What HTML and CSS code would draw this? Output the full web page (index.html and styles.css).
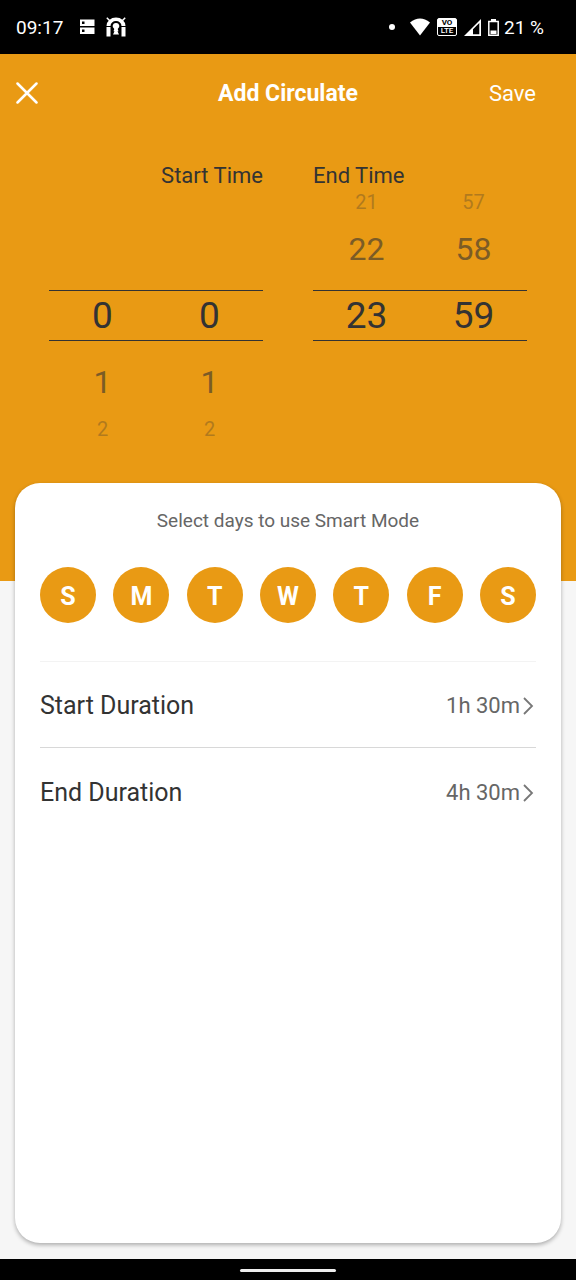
FILE: index.html
```html
<!DOCTYPE html>
<html lang="en">
<head>
<meta charset="utf-8">
<meta name="viewport" content="width=device-width, initial-scale=1">
<title>Add Circulate</title>
<link rel="stylesheet" href="styles.css">
</head>
<body>
<div class="status">
  <span class="clock">09:17</span>
  <svg class="icon-storage" width="16" height="16" viewBox="0 0 16 16" aria-hidden="true"><path fill="#fff" fill-rule="evenodd" d="M1 0.500H15.500V7H1zM3 2.500V5H5.500V2.500zM1 8.500H15.500V15H1zM3 10.500V13H5.500V10.500z"/></svg>
  <svg class="icon-key" width="20" height="20" viewBox="0 0 20 20" aria-hidden="true"><path fill="none" stroke="#fff" stroke-width="1.500" d="M0.800 0.800L4 4M19.200 0.800L16 4"/><path fill="#fff" d="M0.500 9A9.500 8.500 0 0 1 19.500 9H15.500A5.500 5 0 0 0 4.500 9zM0.500 10H4.500V19.500H0.500zM15.500 10H19.500V19.500H15.500z"/><path fill="#fff" d="M10 6A3.200 3.200 0 0 1 11.700 12L12.500 14.200H11.500L13 17.500H7L8.500 14.200H7.500L8.300 12A3.200 3.200 0 0 1 10 6z"/></svg>
  <div class="indicators">
    <span class="dot"></span>
    <svg width="20" height="18" viewBox="0 0 20 18" aria-hidden="true"><path fill="#fff" d="M0 4.500Q10-3.500 20 4.500L10 17.500z"/></svg>
    <span class="volte"><span class="vo">VO</span><span class="lte">LTE</span></span>
    <svg width="17" height="17" viewBox="0 0 17 17" aria-hidden="true"><path fill="#fff" fill-rule="evenodd" d="M17 0V17H0zM15.300 4L9 10.300V15.300H15.300z"/></svg>
    <svg width="11" height="17" viewBox="0 0 11 17" aria-hidden="true"><path fill="none" stroke="#fff" stroke-width="1.500" d="M0.800 2.500H10.200V16.200H0.800z"/><path fill="#fff" d="M3 0H8V2.500H3zM2.500 11.500H8.500V15H2.500z"/></svg>
    <span class="percent">21 %</span>
  </div>
</div>
<header class="hero">
  <div class="toolbar">
    <button class="close" type="button" aria-label="Close"><svg width="22" height="22" viewBox="0 0 22 22" aria-hidden="true"><path fill="none" stroke="#fff" stroke-width="2.500" stroke-linecap="round" d="M1.500 1.500L20.500 20.500M20.500 1.500L1.500 20.500"/></svg></button>
    <h1 class="title">Add Circulate</h1>
    <button class="save" type="button">Save</button>
  </div>
  <div class="pickers">
    <section class="picker picker-start">
      <h2 class="label">Start Time</h2>
      <div class="wheels">
        <div class="wheel"><span class="far"></span><span class="near"></span><span class="current">0</span><span class="near">1</span><span class="far">2</span></div>
        <div class="wheel"><span class="far"></span><span class="near"></span><span class="current">0</span><span class="near">1</span><span class="far">2</span></div>
      </div>
    </section>
    <section class="picker">
      <h2 class="label">End Time</h2>
      <div class="wheels">
        <div class="wheel"><span class="far">21</span><span class="near">22</span><span class="current">23</span><span class="near"></span><span class="far"></span></div>
        <div class="wheel"><span class="far">57</span><span class="near">58</span><span class="current">59</span><span class="near"></span><span class="far"></span></div>
      </div>
    </section>
  </div>
</header>
<main class="card">
  <p class="hint">Select days to use Smart Mode</p>
  <div class="days">
    <button class="day" type="button" aria-pressed="true">S</button>
    <button class="day" type="button" aria-pressed="true">M</button>
    <button class="day" type="button" aria-pressed="true">T</button>
    <button class="day" type="button" aria-pressed="true">W</button>
    <button class="day" type="button" aria-pressed="true">T</button>
    <button class="day" type="button" aria-pressed="true">F</button>
    <button class="day" type="button" aria-pressed="true">S</button>
  </div>
  <button class="row row-start" type="button"><span>Start Duration</span><span class="value">1h 30m<svg width="16" height="18" viewBox="0 0 16 18" aria-hidden="true"><path fill="none" stroke="#777" stroke-width="1.800" d="M4 1L12 9L4 17"/></svg></span></button>
  <button class="row" type="button"><span>End Duration</span><span class="value">4h 30m<svg width="16" height="18" viewBox="0 0 16 18" aria-hidden="true"><path fill="none" stroke="#777" stroke-width="1.800" d="M4 1L12 9L4 17"/></svg></span></button>
</main>
<div class="navbar"><span class="handle"></span></div>
</body>
</html>
```
FILE: styles.css
```css
* {
  box-sizing: border-box;
}

body {
  margin: 0;
  min-height: 100vh;
  display: flex;
  flex-direction: column;
  background: #f6f6f6;
  color: #333;
  font-family: Roboto, "Liberation Sans", sans-serif;
}

button {
  border: 0;
  padding: 0;
  background: none;
  color: inherit;
  font: inherit;
  cursor: pointer;
}

svg {
  display: block;
  flex: none;
}

.status {
  height: 54px;
  padding: 0 32px 0 16px;
  display: flex;
  align-items: center;
  background: #000;
  color: #fff;
  font-size: 19px;
}

.icon-storage {
  margin-left: 16px;
}

.icon-key {
  margin-left: 11px;
}

.indicators {
  margin-left: auto;
  display: flex;
  align-items: center;
  gap: 7px;
}

.dot {
  width: 6px;
  height: 6px;
  margin-right: 8px;
  border-radius: 50%;
  background: #fff;
}

.volte {
  width: 20px;
  border: 1px solid #fff;
  border-radius: 2px;
  display: flex;
  flex-direction: column;
  font-size: 8px;
  font-weight: 500;
  line-height: 8px;
  text-align: center;
}

.vo {
  background: #fff;
  color: #000;
  font-weight: 700;
}

.percent {
  margin-left: -2px;
}

.hero {
  flex: none;
  padding-bottom: 140px;
  background: #e99a14;
}

.toolbar {
  height: 78px;
  padding: 0 40px 0 16px;
  display: grid;
  grid-template-columns: 1fr auto 1fr;
  align-items: center;
  color: #fff;
}

.close {
  justify-self: start;
}

.title {
  margin: 0 0 0 24px;
  font-size: 23px;
  font-weight: 700;
}

.save {
  justify-self: end;
  font-size: 22px;
}

.pickers {
  padding: 30px 49px 0;
  display: grid;
  grid-template-columns: 1fr 1fr;
  gap: 50px;
}

.label {
  margin: 0;
  font-size: 22px;
  line-height: 28px;
  font-weight: 400;
}

.picker-start .label {
  text-align: right;
}

.wheels {
  display: grid;
  grid-template-columns: 1fr 1fr;
}

.wheel {
  display: flex;
  flex-direction: column;
  gap: 12px;
  text-align: center;
}

.far {
  height: 24px;
  font-size: 20px;
  line-height: 24px;
  opacity: 0.3;
}

.near {
  height: 46px;
  font-size: 32px;
  line-height: 46px;
  opacity: 0.6;
}

.current {
  margin: 6px 0;
  border: solid #333;
  border-width: 1px 0;
  font-size: 37px;
  line-height: 49px;
}

.card {
  flex: 1;
  margin: -98px 15px 16px;
  padding: 24px 25px;
  border-radius: 25px;
  background: #fff;
  box-shadow: 0 2px 4px rgba(0, 0, 0, 0.3);
}

.hint {
  margin: 0;
  color: #666;
  font-size: 19px;
  line-height: 28px;
  text-align: center;
}

.days {
  padding: 32px 0 38px;
  display: flex;
  justify-content: space-between;
}

.day {
  width: 56px;
  height: 56px;
  padding-top: 2px;
  border-radius: 50%;
  background: #e99a14;
  color: #fff;
  font-size: 25px;
  font-weight: 700;
}

.row {
  width: 100%;
  height: 87px;
  padding-top: 2px;
  display: flex;
  align-items: center;
  justify-content: space-between;
  font-size: 25px;
}

.row-start {
  border-top: 1px solid #f3f3f3;
  border-bottom: 1px solid #d8d8d8;
}

.value {
  display: flex;
  align-items: center;
  color: #666;
  font-size: 22px;
}

.navbar {
  height: 21px;
  padding-top: 10px;
  display: flex;
  justify-content: center;
  background: #000;
}

.handle {
  width: 96px;
  height: 3px;
  border-radius: 2px;
  background: #eee;
}
```
